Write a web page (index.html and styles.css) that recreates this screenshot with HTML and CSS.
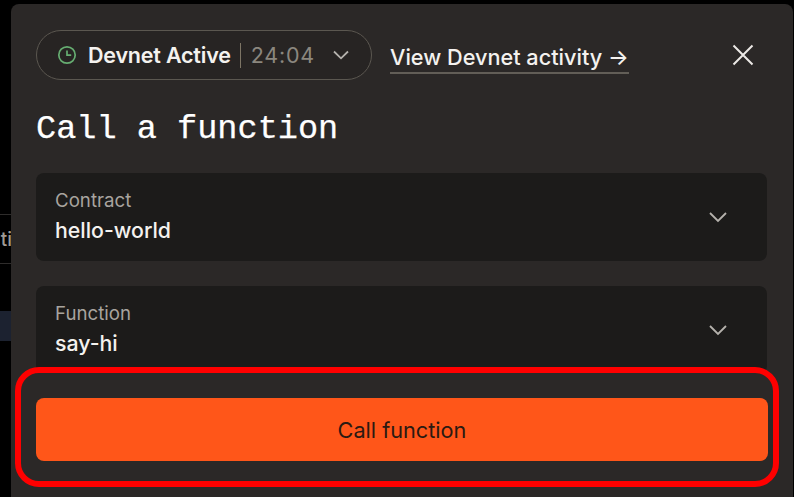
FILE: index.html
```html
<!DOCTYPE html>
<html lang="en">
<head>
<meta charset="utf-8">
<title>Call a function</title>
<link rel="stylesheet" href="styles.css">
</head>
<body>
<aside class="behind">
  <div class="behind-tab"><span class="behind-text">ti</span></div>
  <div class="behind-stripe"></div>
</aside>
<main class="panel">
  <header class="top">
    <div class="status">
      <svg class="clock" viewBox="0 0 20 20" width="20" height="20" aria-hidden="true"><circle cx="10" cy="10" r="8.2"/><path d="M10 5.5V10.2H14.2"/></svg>
      <span class="status-name">Devnet Active</span>
      <span class="status-sep"></span>
      <span class="status-time">24:04</span>
      <svg class="chev chev-small" viewBox="0 0 16 10" width="16" height="10" aria-hidden="true"><path d="M1 1.5L8 8.3L15 1.5"/></svg>
    </div>
    <a class="activity">View Devnet activity →</a>
    <svg class="close" viewBox="0 0 22 22" width="22" height="22" aria-hidden="true"><path d="M1.5 1.5L20.5 20.5M20.5 1.5L1.5 20.5"/></svg>
  </header>
  <h1 class="title">Call a function</h1>
  <div class="field">
    <div class="field-text"><span class="field-label">Contract</span><span class="field-value">hello-world</span></div>
    <svg class="chev" viewBox="0 0 20 12" width="20" height="12" aria-hidden="true"><path d="M2 2L10 10L18 2"/></svg>
  </div>
  <div class="field field-cut">
    <div class="field-text"><span class="field-label">Function</span><span class="field-value">say-hi</span></div>
    <svg class="chev" viewBox="0 0 20 12" width="20" height="12" aria-hidden="true"><path d="M2 2L10 10L18 2"/></svg>
  </div>
  <div class="action">
    <button class="call">Call function</button>
  </div>
</main>
</body>
</html>
```
FILE: styles.css
```css
* { box-sizing: border-box; }
html, body { margin: 0; height: 100%; }
body {
  width: 794px; height: 497px; overflow: hidden;
  background: #000; display: flex;
  font-family: Inter, "Liberation Sans", sans-serif;
  color: #f4f2ef; padding-top: 4px;
}
.behind { width: 11px; flex: none; padding-top: 210px; }
.behind-tab {
  height: 50px; border-top: 1px solid #2e2c2b; border-bottom: 1px solid #2e2c2b;
  overflow: hidden; display: flex; align-items: center; justify-content: flex-end;
}
.behind-text { font-size: 19px; font-weight: 500; color: #a09b95; margin-right: -1px; }
.behind-stripe { height: 30px; margin-top: 47px; background: #1c2230; }
.panel {
  width: 782px; height: 493px; flex: none;
  background: #2b2827; border-radius: 8px 8px 0 0;
  padding: 26px 26px 0 25px; position: relative;
}
.top { display: flex; align-items: center; height: 50px; }
.status {
  width: 336px; height: 50px; border: 1px solid #5b5750; border-radius: 25px;
  display: flex; align-items: center; padding-left: 20px;
  flex: none; background: #272423;
}
.clock { fill: none; stroke: #66ad71; stroke-width: 1.7; flex: none; }
.status-name { font-size: 21.5px; font-weight: 600; margin-left: 11px; letter-spacing: -0.2px; white-space: nowrap; }
.status-sep { width: 1px; height: 25px; background: #7d7565; margin-left: 9px; }
.status-time { font-size: 21.5px; color: #8b877f; margin-left: 10px; letter-spacing: 0.8px; }
.chev { fill: none; stroke: #b5b2ad; stroke-width: 1.8; flex: none; }
.chev-small { margin-left: 18px; }
.activity {
  margin-left: 18px; font-size: 21.7px; font-weight: 500; line-height: 27px;
  padding-top: 3px; padding-bottom: 1px; border-bottom: 2px solid #625e57;
  white-space: nowrap; margin-top: 5px;
}
.close { margin-left: 103px; fill: none; stroke: #ece9e6; stroke-width: 2; flex: none; }
.title {
  margin: 27px 0 0; font-family: "Liberation Mono", "DejaVu Sans Mono", monospace;
  font-size: 33.6px; font-weight: 400; line-height: 44px; color: #fff;
  height: 47px; -webkit-text-stroke: 0.25px #fff;
}
.field {
  margin-top: 19px; height: 88px; background: #1c1b1a; border-radius: 8px;
  display: flex; align-items: center; justify-content: space-between;
  padding: 0 39px 0 19px;
}
.field + .field { margin-top: 25px; }
.field-text { display: flex; flex-direction: column; margin-top: -2px; }
.field-label { font-size: 18.7px; line-height: 28px; color: #a8a49f; }
.field-value { font-size: 21.3px; line-height: 31px; font-weight: 500; color: #f4f2ef; }
.action {
  position: absolute; left: 4px; right: 14px; top: 363px; height: 120px;
  border: 6px solid #ff0000; border-radius: 24px; background: #2b2827;
  padding: 25px 5px 0 15px;
}
.call {
  display: block; width: 100%; height: 63px; border: 0; border-radius: 8px;
  background: #ff5619; font: 400 21.7px Inter, "Liberation Sans", sans-serif; color: #2b1a12;
}
```
